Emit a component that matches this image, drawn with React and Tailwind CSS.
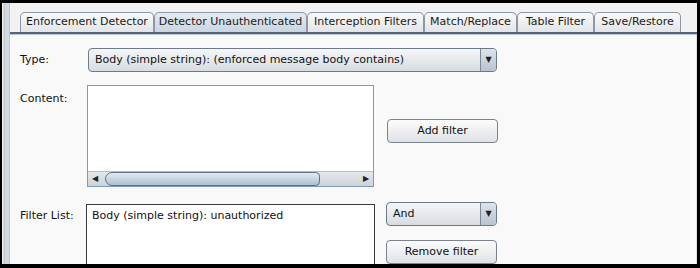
const tabs = [
  { name: "Enforcement Detector", w: "w-[134px]" },
  { name: "Detector Unauthenticated", w: "w-[153px]", active: true },
  { name: "Interception Filters", w: "w-[117px]" },
  { name: "Match/Replace", w: "w-[93px]" },
  { name: "Table Filter", w: "w-[77px]" },
  { name: "Save/Restore", w: "w-[87px]" },
];

function Combo({ value, className }) {
  return (
    <div
      className={`flex h-[24px] shrink-0 rounded-[4px] border border-[#6e7a88] bg-gradient-to-b from-[#f5f6f8] to-[#d8dce1] ${className}`}
    >
      <div className="flex flex-1 items-center pl-[6px] text-[#111]">{value}</div>
      <div className="flex w-[16px] items-center justify-center rounded-r-[3px] border-l border-[#7d8896] bg-gradient-to-b from-[#dde4ec] to-[#b9c4d0] text-[8px] text-[#222]">
        ▼
      </div>
    </div>
  );
}

function Button({ children }) {
  return (
    <div className="flex h-[24px] w-[111px] shrink-0 items-center justify-center rounded-[4px] border border-[#7a8490] bg-gradient-to-b from-[#fcfcfc] to-[#dfe2e6] text-[#111]">
      {children}
    </div>
  );
}

export default function App() {
  return (
    <div
      className="h-[268px] w-[700px] overflow-hidden bg-black pb-[4px] pl-[2px] pr-[3px] pt-[3px] text-[11px]"
      style={{ fontFamily: '"DejaVu Sans", sans-serif' }}
    >
      <div className="flex h-full bg-[#f0f0f0]">
        {/* left gutter */}
        <div className="flex w-[8px] shrink-0 border-l border-[#f4f4f4] bg-[#d4d9e0]">
          <div className="ml-[1px] w-[1px] bg-[#c2c8d0]" />
          <div className="flex-1" />
          <div className="w-[1px] bg-[#bfc5cd]" />
        </div>

        <div className="flex min-w-0 flex-1 flex-col overflow-hidden">
          {/* tab strip */}
          <div className="flex h-[29px] shrink-0 items-end bg-[#f2f2f2] pl-[10px]">
            {tabs.map((t) => (
              <div
                key={t.name}
                className={`${t.w} flex h-[20px] items-center justify-center rounded-t-[5px] border border-b-0 border-[#8d98a4] ${
                  t.active
                    ? "bg-gradient-to-b from-[#e4ebf2] to-[#c9d5e1]"
                    : "bg-gradient-to-b from-[#fafafa] to-[#e2e4e7]"
                } text-[#1a1a1a]`}
              >
                {t.name}
              </div>
            ))}
          </div>
          <div className="h-[2px] shrink-0 bg-[#56657a]" />
          <div className="h-[1px] shrink-0 bg-[#b8c6d6]" />

          {/* content */}
          <div className="flex min-h-0 flex-1 flex-col overflow-hidden border-r border-[#e2e2e2] bg-[#f9f9f9] pl-[10px] pt-[13px]">
            <div className="flex shrink-0 items-center">
              <div className="w-[68px] text-[#111]">Type:</div>
              <Combo className="w-[409px]" value="Body (simple string): (enforced message body contains)" />
            </div>

            <div className="mt-[13px] flex shrink-0">
              <div className="w-[67px] pt-[6px] text-[#111]">Content:</div>
              <div className="flex h-[102px] w-[287px] flex-col border border-[#7f9ab6] bg-white">
                <div className="flex-1" />
                <div className="flex h-[15px] items-center border-t border-[#b5c0cc] bg-gradient-to-b from-[#e4e7eb] to-[#cfd4da]">
                  <div className="flex w-[14px] items-center justify-center text-[8px] text-[#222]">◀</div>
                  <div className="ml-[3px] h-[14px] w-[215px] rounded-l-[10px] rounded-r-[6px] border border-[#5d7084] bg-gradient-to-b from-[#e3ebf3] to-[#aec0d2]" />
                  <div className="flex-1" />
                  <div className="flex w-[14px] items-center justify-center text-[8px] text-[#222]">▶</div>
                </div>
              </div>
              <div className="ml-[13px] pt-[34px]">
                <Button>Add filter</Button>
              </div>
            </div>

            <div className="mt-[15px] flex shrink-0 items-start">
              <div className="w-[66px] pt-[6px] text-[#111]">Filter List:</div>
              <div className="mt-[2px] h-[80px] w-[289px] border border-[#3a3a3a] bg-white px-[5px] pt-[3px] text-[#111]">
                Body (simple string): unauthorized
              </div>
              <div className="ml-[11px] flex flex-col gap-[14px]">
                <Combo className="w-[111px]" value="And" />
                <Button>Remove filter</Button>
              </div>
            </div>
          </div>
        </div>
      </div>
    </div>
  );
}
